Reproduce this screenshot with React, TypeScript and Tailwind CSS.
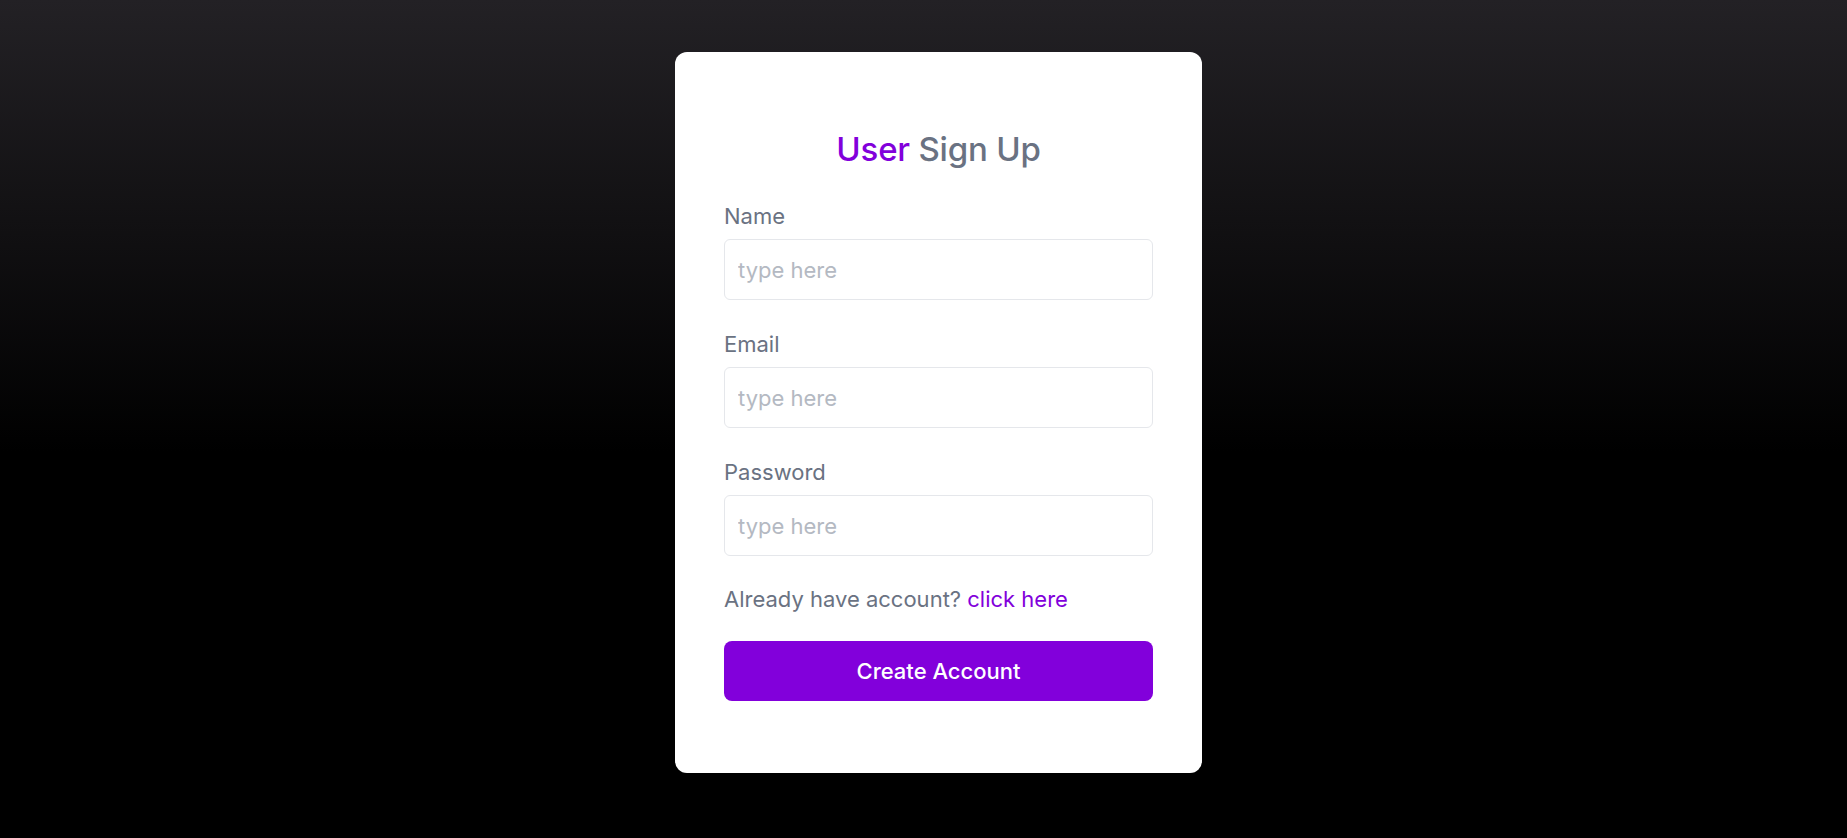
import { useState } from 'react';

const fields = [
  { id: 'name', label: 'Name', type: 'text' },
  { id: 'email', label: 'Email', type: 'email' },
  { id: 'password', label: 'Password', type: 'password' },
];

export default function App() {
  const [values, setValues] = useState<Record<string, string>>({});

  return (
    <div className="min-h-[838px] w-full bg-linear-to-b/srgb from-[#232125] to-black to-[54%] font-['Inter',sans-serif]">
      <div className="flex justify-center pl-[30px] pt-[52px]">
        {/* Card */}
        <div className="w-[527px] h-[721px] bg-white rounded-xl px-[49px] pt-[77px]">
          <h1 className="text-center text-[33px] leading-[40px] font-medium text-[#6a7282] tracking-[-0.2px]">
            <span className="text-[#8200db]">User</span> Sign Up
          </h1>

          <form className="mt-[32px]" onSubmit={(e) => e.preventDefault()}>
            {fields.map((f) => (
              <div key={f.id} className="mb-[29px]">
                <label htmlFor={f.id} className="block text-[22px] leading-[30px] text-[#6a7282] mb-2">
                  {f.label}
                </label>
                <input
                  id={f.id}
                  type={f.type}
                  placeholder="type here"
                  value={values[f.id] || ''}
                  onChange={(e) => setValues({ ...values, [f.id]: e.target.value })}
                  className="block w-full h-[61px] border border-[#e5e7eb] rounded-md px-[13px] text-[22px] text-[#6a7282] placeholder:text-[#b4b9c2] outline-none"
                />
              </div>
            ))}

            <p className="text-[22px] leading-[30px] text-[#6a7282] -mt-px">
              Already have account? <a href="#" className="text-[#8200db]">click here</a>
            </p>

            <button
              type="submit"
              className="mt-[27px] w-full h-[60px] rounded-lg bg-[#8200db] text-white text-[22px] font-medium"
            >
              Create Account
            </button>
          </form>
        </div>
      </div>
    </div>
  );
}
